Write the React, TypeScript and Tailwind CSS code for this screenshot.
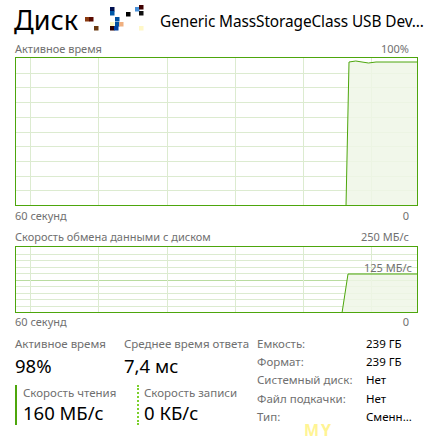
import React from "react";

const FONT = { fontFamily: '"Noto Sans", "Open Sans", sans-serif' };

function Noise() {
  const px: [number, number, string][] = [
    [0, 12, "#8a3a10"],
    [4, 12, "#5a0a00"],
    [9, 21, "#6b3a10"],
    [25, 2, "#001050"],
    [25, 6, "#0058a8"],
    [41, 7, "#000000"],
    [50, 2, "#4890d8"],
    [54, 0, "#400000"],
    [54, 6, "#101010"],
    [30, 12, "#0050a0"],
    [25, 17, "#fff8c0"],
    [30, 17, "#0050a0"],
    [34, 17, "#f0b080"],
    [25, 21, "#300000"],
    [29, 21, "#0040a0"],
    [54, 21, "#fff8c8"],
  ];
  return (
    <svg width="60" height="26" viewBox="0 0 60 26" className="shrink-0">
      {px.map(([x, y, c], i) => (
        <rect key={i} x={x} y={y} width="4.5" height="4.5" fill={c} />
      ))}
    </svg>
  );
}

function Graph({
  height,
  rows,
  data,
  midLine,
}: {
  height: number;
  rows: number;
  data: string;
  midLine?: boolean;
}) {
  const w = 401;
  const vx = [14, 82, 151, 219, 287, 355];
  const hs: number[] = [];
  for (let i = 1; i < rows; i++) hs.push((height * i) / rows);
  return (
    <div
      className="relative border border-[#4da60c] bg-white"
      style={{ height: height + 2 }}
    >
      <svg width={w} height={height} className="block">
        {hs.map((y, i) => (
          <line
            key={"h" + i}
            x1="0"
            x2={w}
            y1={Math.round(y) + 0.5}
            y2={Math.round(y) + 0.5}
            stroke={midLine && i === rows / 2 - 1 ? "#b9dca0" : "#dcebd0"}
            strokeWidth="1"
          />
        ))}
        {vx.map((x, i) => (
          <line
            key={"v" + i}
            x1={x + 0.5}
            x2={x + 0.5}
            y1="0"
            y2={height}
            stroke="#dcebd0"
            strokeWidth="1"
          />
        ))}
        <path d={data} fill="#eef6e6" fillOpacity="0.85" stroke="#4da60c" strokeWidth="1" />
      </svg>
    </div>
  );
}

export default function App() {
  return (
    <div className="w-[424px] h-[444px] bg-white overflow-hidden relative" style={FONT}>
      {/* header */}
      <div className="flex items-center h-[40px] pl-[14px] pr-[7px]">
        <span className="text-[27px] leading-none text-black mt-[-1px]">Диск</span>
        <div className="ml-[7px] mt-[-4px]">
          <Noise />
        </div>
        <span className="ml-[15px] text-[15.4px] tracking-[-0.1px] leading-none text-black whitespace-nowrap mt-[4px]">
          Generic MassStorageClass USB Dev...
        </span>
      </div>

      <div className="px-[15px]">
        <div className="flex justify-between text-[11px] leading-[15px] text-[#707070] h-[15px] mt-[1px]">
          <span>Активное время</span>
          <span>100%</span>
        </div>
        <div className="mt-[1px] w-[403px]">
          <Graph
            height={147}
            rows={10}
            data="M 330 148 L 333 4 Q 340 2 346 4 Q 352 6 360 4 L 402 4 L 402 148 Z"
          />
        </div>
        <div className="flex justify-between text-[11px] leading-[15px] text-[#707070] h-[15px] mt-[2px]">
          <span>60 секунд</span>
          <span>0</span>
        </div>
        <div className="flex justify-between text-[11px] leading-[15px] text-[#707070] h-[15px] mt-[6px]">
          <span>Скорость обмена данными с диском</span>
          <span>250 МБ/с</span>
        </div>
        <div className="mt-[2px] w-[403px] relative">
          <Graph
            height={65}
            rows={10}
            midLine
            data="M 326 66 L 332 27 L 402 27 L 402 66 Z"
          />
          <span className="absolute right-[6px] top-[14px] text-[11px] leading-[15px] text-[#707070]">
            125 МБ/с
          </span>
        </div>
        <div className="flex justify-between text-[11px] leading-[15px] text-[#707070] h-[15px] mt-[1px]">
          <span>60 секунд</span>
          <span>0</span>
        </div>

        {/* stats */}
        <div className="flex mt-[7px]">
          <div className="w-[240px] shrink-0">
            <div className="flex">
              <div className="w-[109px]">
                <div className="text-[11.5px] leading-[16px] text-[#707070]">Активное время</div>
                <div className="text-[18.5px] leading-[24px] text-black mt-[2px]">98%</div>
              </div>
              <div>
                <div className="text-[11.5px] leading-[16px] text-[#707070] whitespace-nowrap">
                  Среднее время ответа
                </div>
                <div className="text-[18.5px] leading-[24px] text-black mt-[2px]">7,4 мс</div>
              </div>
            </div>
            <div className="flex mt-[7px]">
              <div className="w-[122px] flex">
                <div className="w-[2px] h-[40px] bg-[#4da60c]" />
                <div className="pl-[6px]">
                  <div className="text-[11.5px] leading-[16px] text-[#707070]">
                    Скорость чтения
                  </div>
                  <div className="text-[18.5px] leading-[24px] text-black">160 МБ/с</div>
                </div>
              </div>
              <div className="flex">
                <div className="w-[2px] h-[40px] border-l-2 border-dotted border-[#7cd02c]" />
                <div className="pl-[5px]">
                  <div className="text-[11.5px] leading-[16px] text-[#707070] whitespace-nowrap">
                    Скорость записи
                  </div>
                  <div className="text-[18.5px] leading-[24px] text-black">0 КБ/с</div>
                </div>
              </div>
            </div>
          </div>
          <div className="ml-[2px] grid grid-cols-[109px_1fr] text-[11.5px] leading-[18.2px] mt-[-1px]">
            <span className="text-[#707070]">Емкость:</span>
            <span className="text-black">239 ГБ</span>
            <span className="text-[#707070]">Формат:</span>
            <span className="text-black">239 ГБ</span>
            <span className="text-[#707070]">Системный диск:</span>
            <span className="text-black">Нет</span>
            <span className="text-[#707070]">Файл подкачки:</span>
            <span className="text-black">Нет</span>
            <span className="text-[#707070]">Тип:</span>
            <span className="text-black">Сменн...</span>
          </div>
        </div>
      </div>

      <span className="absolute left-[304px] top-[418px] text-[16px] font-bold text-[#fff27a] tracking-[2px] opacity-80">
        MY
      </span>
    </div>
  );
}
